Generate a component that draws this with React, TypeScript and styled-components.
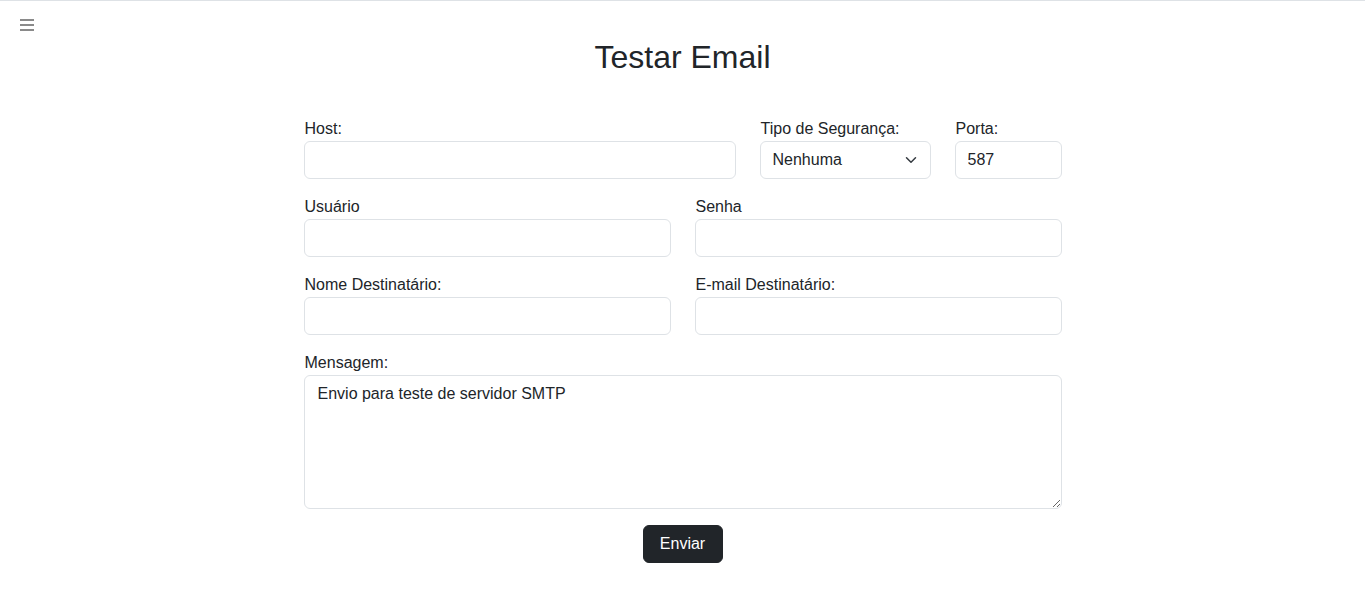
import React from "react";
import styled, { createGlobalStyle } from "styled-components";

const Global = createGlobalStyle`
  html, body { margin: 0; padding: 0; background: #fff; }
  body {
    font-family: "Liberation Sans", Arial, sans-serif;
    color: #212529;
    font-size: 16px;
    line-height: 1.5;
    border-top: 1px solid #dee2e6;
  }
  * { box-sizing: border-box; }
`;

const TopBar = styled.header`
  height: 37px;
  padding: 18px 0 0 20px;
`;

const MenuButton = styled.button`
  display: flex;
  flex-direction: column;
  gap: 3px;
  width: 14px;
  padding: 0;
  border: 0;
  background: none;
  cursor: pointer;
  span {
    display: block;
    height: 2px;
    background: #8a8a8a;
  }
`;

const Main = styled.main`
  width: 758px;
  margin: 0 auto;
`;

const Title = styled.h2`
  margin: 0 0 40px;
  text-align: center;
  font-size: 32px;
  font-weight: 400;
  line-height: 1.2;
  color: #212529;
`;

const Form = styled.form`
  display: flex;
  flex-direction: column;
  gap: 15px;
`;

const Row = styled.div<{ $cols: string }>`
  display: grid;
  grid-template-columns: ${(p) => p.$cols};
  column-gap: 24px;
`;

const Field = styled.div`
  display: flex;
  flex-direction: column;
`;

const Label = styled.label`
  font-size: 16px;
  line-height: 24px;
  padding: 1px 0 0 1px;
  color: #212529;
`;

const Input = styled.input`
  height: 38px;
  width: 100%;
  padding: 6px 12px;
  font: inherit;
  font-size: 16px;
  line-height: 24px;
  color: #212529;
  border: 1px solid #dee2e6;
  border-radius: 6px;
  background: #fff;
  outline: none;
`;

const SelectWrap = styled.div`
  position: relative;
`;

const Select = styled.select`
  appearance: none;
  height: 38px;
  width: 100%;
  padding: 6px 36px 6px 12px;
  font: inherit;
  font-size: 16px;
  line-height: 24px;
  color: #212529;
  border: 1px solid #dee2e6;
  border-radius: 6px;
  background: #fff;
  outline: none;
`;

const Chevron = styled.svg`
  position: absolute;
  right: 12px;
  top: 13px;
  pointer-events: none;
`;

const TextArea = styled.textarea`
  height: 134px;
  width: 100%;
  padding: 6px 12px 6px 13px;
  font: inherit;
  font-size: 16px;
  line-height: 24px;
  color: #212529;
  border: 1px solid #dee2e6;
  border-radius: 6px;
  resize: vertical;
  outline: none;
`;

const Actions = styled.div`
  display: flex;
  justify-content: center;
  padding-top: 1px;
`;

const Button = styled.button`
  height: 38px;
  width: 80px;
  padding: 0;
  font: inherit;
  font-size: 16px;
  color: #fff;
  background: #212529;
  border: 1px solid #212529;
  border-radius: 6px;
  cursor: pointer;
`;

export default function App() {
  return (
    <>
      <Global />
      <TopBar>
        <MenuButton type="button" aria-label="menu">
          <span />
          <span />
          <span />
        </MenuButton>
      </TopBar>
      <Main>
        <Title>Testar Email</Title>
        <Form onSubmit={(e) => e.preventDefault()}>
          <Row $cols="1fr 171px 107px">
            <Field>
              <Label>Host:</Label>
              <Input type="text" />
            </Field>
            <Field>
              <Label>Tipo de Segurança:</Label>
              <SelectWrap>
                <Select defaultValue="none">
                  <option value="none">Nenhuma</option>
                  <option value="ssl">SSL</option>
                  <option value="tls">TLS</option>
                </Select>
                <Chevron width="16" height="12" viewBox="0 0 16 16">
                  <path d="m2 5 6 6 6-6" fill="none" stroke="#343a40" strokeWidth="2" strokeLinecap="round" strokeLinejoin="round" />
                </Chevron>
              </SelectWrap>
            </Field>
            <Field>
              <Label>Porta:</Label>
              <Input type="text" defaultValue="587" />
            </Field>
          </Row>
          <Row $cols="1fr 1fr">
            <Field>
              <Label>Usuário</Label>
              <Input type="text" />
            </Field>
            <Field>
              <Label>Senha</Label>
              <Input type="password" />
            </Field>
          </Row>
          <Row $cols="1fr 1fr">
            <Field>
              <Label>Nome Destinatário:</Label>
              <Input type="text" />
            </Field>
            <Field>
              <Label>E-mail Destinatário:</Label>
              <Input type="email" />
            </Field>
          </Row>
          <Field>
            <Label>Mensagem:</Label>
            <TextArea defaultValue="Envio para teste de servidor SMTP" />
          </Field>
          <Actions>
            <Button type="submit">Enviar</Button>
          </Actions>
        </Form>
      </Main>
    </>
  );
}
